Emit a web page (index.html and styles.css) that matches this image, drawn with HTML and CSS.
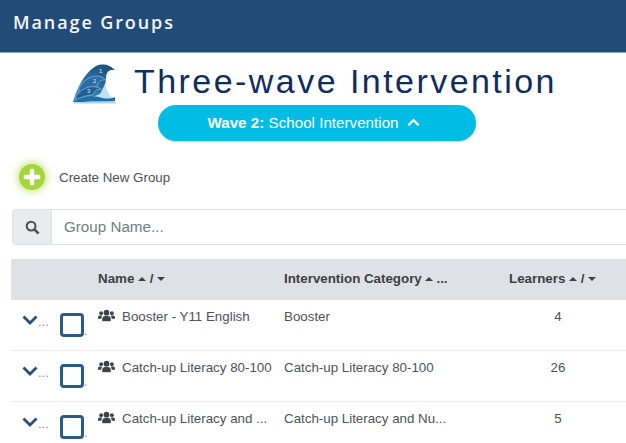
FILE: index.html
```html
<!DOCTYPE html>
<html lang="en">
<head>
<meta charset="utf-8">
<title>Manage Groups</title>
<link rel="stylesheet" href="styles.css">
</head>
<body>
<header class="topbar"><h1 class="page-title">Manage Groups</h1></header>
<div class="brand">
  <svg class="logo" viewBox="0 0 44 40" width="44" height="40" aria-hidden="true">
    <defs>
      <linearGradient id="w1" x1="0.2" y1="1" x2="0.8" y2="0"><stop offset="0" stop-color="#3f8fc4"/><stop offset="1" stop-color="#1c4f80"/></linearGradient>
    </defs>
    <path d="M0 38C4 25 10 10 23 2C30-1 37 1 42 6C37 5 34 8 33 13C31 22 34 30 42 36V39H0Z" fill="#bfe0f2"/>
    <path d="M0 38C4 25 10 10 23 2C30-1 37 1 42 6C37 5 34 7 33 12C34 18 30 24 27 30L12 36Z" fill="url(#w1)"/>
    <path d="M6 24C12 13 25 8 33 16C27 15 24 19 24 23C16 22 10 25 6 31Z" fill="#2a6ca3" stroke="#8fbcdc" stroke-width=".7"/>
    <path d="M3 32C9 23 21 20 28 25C24 25 21 27 20 31C14 31 8 33 3 36Z" fill="#1f5f94" stroke="#8fbcdc" stroke-width=".7"/>
    <path d="M0 38C8 33 18 31 26 33C32 35 37 35 42 33V37C30 38 12 38 0 38Z" fill="#1f6ea8"/>
    <path d="M1 39C12 37 30 37 43 38V39.500H1Z" fill="#9fd5f0"/>
    <text class="logo-num" x="26" y="9">1</text>
    <text class="logo-num" x="20" y="19">2</text>
    <text class="logo-num" x="14" y="29">3</text>
  </svg>
  <span class="brand-name">Three-wave Intervention</span>
</div>
<div class="pill-row">
  <button class="pill" type="button"><span><b>Wave 2:</b> School Intervention</span>
    <svg class="pill-caret" viewBox="0 0 14 9" width="13" height="9" aria-hidden="true"><path d="M1.500 7.500L7 2L12.500 7.500" fill="none" stroke="#fff" stroke-width="2.400"/></svg>
  </button>
</div>
<div class="create">
  <span class="create-icon"><svg viewBox="0 0 16 16" width="18" height="18" aria-hidden="true"><path d="M8 2.500V13.500M2.500 8H13.500" fill="none" stroke="#fff" stroke-width="4" stroke-linecap="round"/></svg></span>
  <span class="create-label">Create New Group</span>
</div>
<div class="search">
  <span class="search-addon"><svg viewBox="0 0 16 16" width="15" height="15" aria-hidden="true"><circle cx="6.500" cy="6.500" r="4.700" fill="none" stroke="#4a5056" stroke-width="2.200"/><path d="M10 10L14.500 14.500" stroke="#4a5056" stroke-width="2.800"/></svg></span>
  <span class="search-input">Group Name...</span>
</div>
<section class="table">
  <div class="row head">
    <span></span><span></span>
    <span class="th name-h">Name <i class="up"></i> / <i class="down"></i></span>
    <span class="th">Intervention Category <i class="up"></i><span class="th-more">...</span></span>
    <span class="th learners-h">Learners <i class="up"></i> / <i class="down"></i></span>
  </div>
  <div class="row">
    <span class="expand"><svg viewBox="0 0 16 10" width="16" height="10" aria-hidden="true"><path d="M1.500 1.500L8 8L14.500 1.500" fill="none" stroke="#24527f" stroke-width="2.800"/></svg><em>...</em></span>
    <span class="check"><i class="box"></i><em>.</em></span>
    <span class="cell name"><svg class="users" viewBox="0 0 18 13" width="17" height="13" aria-hidden="true"><use href="#users"/></svg>Booster - Y11 English</span>
    <span class="cell">Booster</span>
    <span class="cell count">4</span>
  </div>
  <div class="row">
    <span class="expand"><svg viewBox="0 0 16 10" width="16" height="10" aria-hidden="true"><path d="M1.500 1.500L8 8L14.500 1.500" fill="none" stroke="#24527f" stroke-width="2.800"/></svg><em>...</em></span>
    <span class="check"><i class="box"></i><em>.</em></span>
    <span class="cell name"><svg class="users" viewBox="0 0 18 13" width="17" height="13" aria-hidden="true"><use href="#users"/></svg>Catch-up Literacy 80-100</span>
    <span class="cell">Catch-up Literacy 80-100</span>
    <span class="cell count">26</span>
  </div>
  <div class="row">
    <span class="expand"><svg viewBox="0 0 16 10" width="16" height="10" aria-hidden="true"><path d="M1.500 1.500L8 8L14.500 1.500" fill="none" stroke="#24527f" stroke-width="2.800"/></svg><em>...</em></span>
    <span class="check"><i class="box"></i><em>.</em></span>
    <span class="cell name"><svg class="users" viewBox="0 0 18 13" width="17" height="13" aria-hidden="true"><use href="#users"/></svg>Catch-up Literacy and ...</span>
    <span class="cell">Catch-up Literacy and Nu...</span>
    <span class="cell count">5</span>
  </div>
</section>
<svg class="defs" width="0" height="0" aria-hidden="true">
  <symbol id="users" viewBox="0 0 18 13">
    <circle cx="9" cy="3.500" r="3" fill="#3d4247"/>
    <path d="M4.500 12.500V10C4.500 8 6 7 7.500 7H10.500C12 7 13.500 8 13.500 10V12.500Z" fill="#3d4247"/>
    <circle cx="3.300" cy="4" r="2" fill="#3d4247"/>
    <circle cx="14.700" cy="4" r="2" fill="#3d4247"/>
    <path d="M0 10V8.500C0 7 1 6.500 2 6.500H4.500C4 7.500 3.500 8.500 3.500 10Z" fill="#3d4247"/>
    <path d="M18 10V8.500C18 7 17 6.500 16 6.500H13.500C14 7.500 14.500 8.500 14.500 10Z" fill="#3d4247"/>
  </symbol>
</svg>
</body>
</html>
```
FILE: styles.css
```css
html, body {
  margin: 0;
  padding: 0;
  height: 443px;
  overflow: hidden;
  background: #fff;
}
body {
  font-family: "Liberation Sans", Arial, sans-serif;
  color: #495057;
}
.topbar {
  height: 53px;
  box-sizing: border-box;
  background: #224c78;
  border-bottom: 1px solid #8fa3b8;
  padding: 11px 13px 0;
}
.page-title {
  margin: 0;
  font-family: "Open Sans", sans-serif;
  font-size: 18px;
  font-weight: 600;
  letter-spacing: 1.9px;
  line-height: 22px;
  color: #f2f5f8;
}
.brand {
  display: flex;
  align-items: flex-start;
  padding: 11px 0 0 73px;
  height: 41px;
}
.logo {
  flex: none;
  margin-right: 17px;
}
.logo-num {
  font-size: 6px;
  fill: #dbeaf4;
}
.brand-name {
  font-size: 34px;
  line-height: 34px;
  letter-spacing: 2.45px;
  color: #0f2d5e;
  white-space: nowrap;
}
.pill-row {
  padding-left: 158px;
}
.pill {
  display: flex;
  align-items: center;
  justify-content: center;
  gap: 8px;
  width: 318px;
  height: 36px;
  padding: 0 7px 1px 0;
  border: 0;
  border-radius: 18px;
  background: #00bde6;
  box-shadow: 0 1px 1px rgba(0, 0, 0, .18);
  color: #fff;
  font: 15.200px "Liberation Sans", Arial, sans-serif;
}
.create {
  display: flex;
  align-items: center;
  margin: 23px 0 0 19px;
  height: 26px;
}
.create-icon {
  display: flex;
  align-items: center;
  justify-content: center;
  width: 26px;
  height: 26px;
  border-radius: 50%;
  background: #a5d63c;
  box-shadow: 0 0 6px 3px rgba(180, 220, 90, .55);
}
.create-label {
  margin-left: 14px;
  font-size: 13.330px;
  color: #4b5157;
}
.search {
  display: flex;
  height: 36px;
  box-sizing: border-box;
  margin: 19px 0 0 12px;
  border: 1px solid #dee2e6;
  border-right: 0;
  border-radius: 4px 0 0 4px;
}
.search-addon {
  display: flex;
  align-items: center;
  justify-content: center;
  width: 38px;
  background: #e9ecef;
  border-right: 1px solid #dee2e6;
}
.search-input {
  padding-left: 12px;
  line-height: 34px;
  font-size: 15.200px;
  color: #767c83;
}
.table {
  margin: 14px 0 0 11px;
}
.row {
  display: grid;
  grid-template-columns: 46px 41px 186px 225px 1fr;
  height: 50px;
  border-bottom: 1px solid #e9ebed;
  font-size: 13.330px;
  line-height: 16px;
}
.head {
  height: 41px;
  border-bottom: 0;
  background: #dee2e6;
}
.th {
  padding-top: 12px;
  font-size: 13.330px;
  font-weight: 700;
  color: #3b4046;
  white-space: nowrap;
}
.th-more {
  margin-left: 3px;
}
.up, .down {
  display: inline-block;
  width: 0;
  height: 0;
  margin: 0;
  border-left: 4px solid transparent;
  border-right: 4px solid transparent;
  vertical-align: 2px;
}
.up {
  border-bottom: 4px solid #3b4046;
}
.down {
  border-top: 4px solid #3b4046;
}
.expand {
  display: flex;
  align-items: flex-start;
  padding: 15px 0 0 11px;
  overflow: hidden;
}
.expand em, .check em {
  font-style: normal;
  font-size: 13px;
  line-height: 12px;
  color: #8b9197;
}
.expand em {
  margin-left: 0;
  margin-top: 1px;
}
.check {
  display: flex;
  align-items: flex-end;
  padding-bottom: 13px;
  padding-left: 3px;
}
.box {
  display: block;
  box-sizing: border-box;
  width: 24px;
  height: 24px;
  border: 3px solid #2a5a88;
  border-radius: 4px;
}
.cell {
  padding-top: 9px;
  color: #4d5359;
  white-space: nowrap;
}
.users {
  margin-right: 7px;
  vertical-align: -1px;
}
.count {
  width: 98px;
  text-align: center;
}
.defs {
  position: absolute;
}
```
